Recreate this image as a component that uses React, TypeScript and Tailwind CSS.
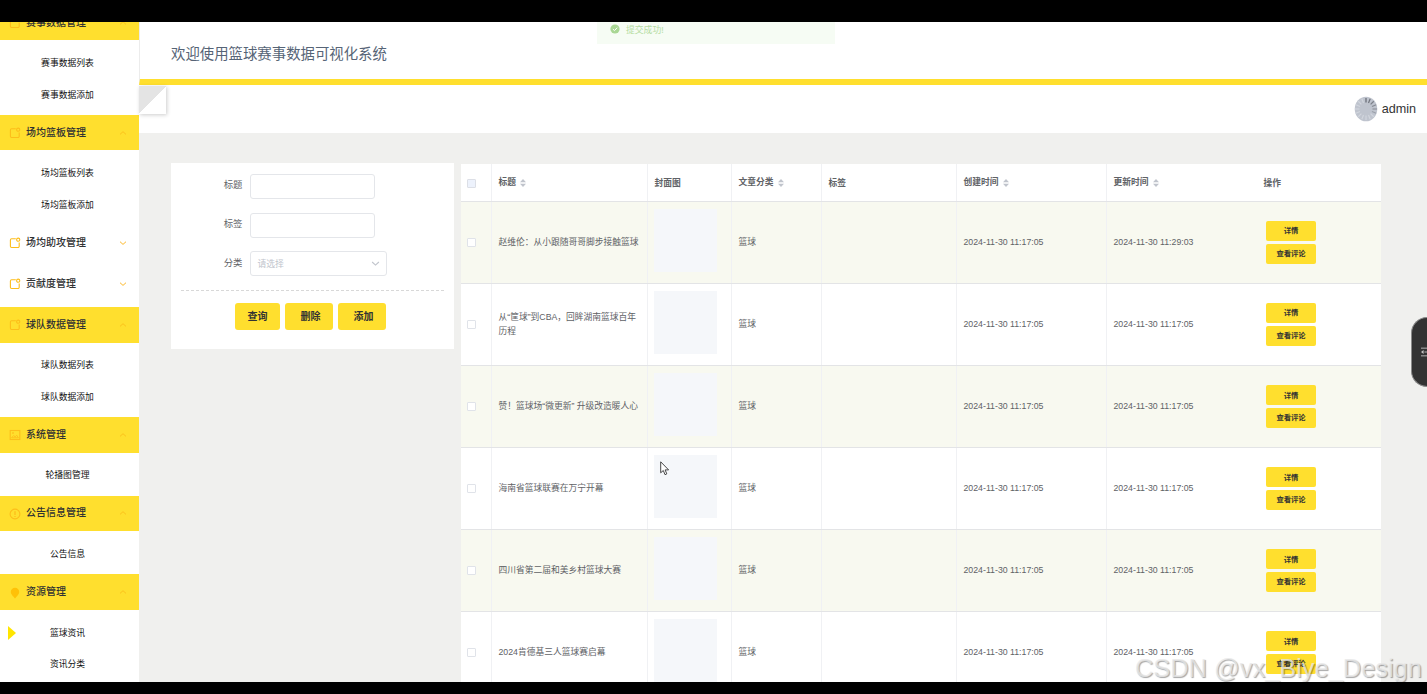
import React from "react";

type MenuGroup = {
  title: string;
  icon: "note" | "image" | "info" | "bulb";
  open: boolean;
  items: string[];
};

type Article = {
  title: string;
  category: string;
  created: string;
  updated: string;
};

const menu: MenuGroup[] = [
  { title: "赛事数据管理", icon: "note", open: true, items: ["赛事数据列表", "赛事数据添加"] },
  { title: "场均篮板管理", icon: "note", open: true, items: ["场均篮板列表", "场均篮板添加"] },
  { title: "场均助攻管理", icon: "note", open: false, items: [] },
  { title: "贡献度管理", icon: "note", open: false, items: [] },
  { title: "球队数据管理", icon: "note", open: true, items: ["球队数据列表", "球队数据添加"] },
  { title: "系统管理", icon: "image", open: true, items: ["轮播图管理"] },
  { title: "公告信息管理", icon: "info", open: true, items: ["公告信息"] },
  { title: "资源管理", icon: "bulb", open: true, items: ["篮球资讯", "资讯分类"] },
];

const articles: Article[] = [
  { title: "赵维伦：从小跟随哥哥脚步接触篮球", category: "篮球", created: "2024-11-30 11:17:05", updated: "2024-11-30 11:29:03" },
  { title: "从“筐球”到CBA，回眸湖南篮球百年历程", category: "篮球", created: "2024-11-30 11:17:05", updated: "2024-11-30 11:17:05" },
  { title: "赞！篮球场“微更新” 升级改造暖人心", category: "篮球", created: "2024-11-30 11:17:05", updated: "2024-11-30 11:17:05" },
  { title: "海南省篮球联赛在万宁开幕", category: "篮球", created: "2024-11-30 11:17:05", updated: "2024-11-30 11:17:05" },
  { title: "四川省第二届和美乡村篮球大赛", category: "篮球", created: "2024-11-30 11:17:05", updated: "2024-11-30 11:17:05" },
  { title: "2024肯德基三人篮球赛启幕", category: "篮球", created: "2024-11-30 11:17:05", updated: "2024-11-30 11:17:05" },
];

const columns = [
  { label: "标题", sortable: true },
  { label: "封面图", sortable: false },
  { label: "文章分类", sortable: true },
  { label: "标签", sortable: false },
  { label: "创建时间", sortable: true },
  { label: "更新时间", sortable: true },
  { label: "操作", sortable: false },
];

const rowGrid = "grid grid-cols-[31px_156px_84px_90px_135px_150px_150px_1fr]";

function MenuIcon({ name }: { name: MenuGroup["icon"] }) {
  if (name === "bulb") {
    return (
      <svg viewBox="0 0 12 12" className="size-3" fill="#ffc107">
        <path d="M6 .8a4.2 4.2 0 0 0-4.2 4.2c0 1.9 1.3 3 2.1 4.2h4.2c.8-1.2 2.1-2.3 2.1-4.2A4.2 4.2 0 0 0 6 .8zM4.1 9.2h3.8L6 11.6z" />
      </svg>
    );
  }
  return (
    <svg viewBox="0 0 12 12" className="size-3" fill="none" stroke="#fdbd1a" strokeWidth="1.1">
      {name === "note" && (
        <>
          <path d="M6.8 1.7H2.6a1.2 1.2 0 0 0-1.2 1.2v6.4a1.2 1.2 0 0 0 1.2 1.2H9a1.2 1.2 0 0 0 1.2-1.2V5.4" />
          <circle cx="9.2" cy="2.7" r="1.6" />
        </>
      )}
      {name === "image" && (
        <>
          <rect x="1.2" y="1.5" width="9.6" height="9" />
          <path d="M2.6 8.8 4.6 6.6l1.6 1.3 1.5-1.7 1.7 2.6z" strokeWidth=".9" />
          <circle cx="4" cy="4" r=".6" strokeWidth=".8" />
        </>
      )}
      {name === "info" && (
        <>
          <circle cx="6" cy="6" r="4.9" />
          <path d="M6 3.2v3.9M6 8v1" strokeWidth="1.3" />
        </>
      )}
    </svg>
  );
}

function Chevron({ up, className }: { up?: boolean; className: string }) {
  return (
    <svg viewBox="0 0 8 8" className={className} fill="none" stroke="currentColor" strokeWidth="1">
      <path d={up ? "M1 5.4 4 2.7l3 2.7" : "M1 2.7 4 5.4l3-2.7"} />
    </svg>
  );
}

function SortIcon() {
  return (
    <svg viewBox="0 0 6 8" className="ml-1 mt-px h-2 w-1.5" fill="#c0c4cc">
      <path d="M3 0 6 3.2H0zM3 8 6 4.8H0z" />
    </svg>
  );
}

function Sidebar() {
  return (
    <aside className="w-[139px] shrink-0 overflow-hidden bg-white">
      <nav className="-mt-[17.3px]">
        {menu.map((group) => (
          <div key={group.title} className={group.open ? "" : "mb-1.5"}>
            <div
              className={`flex h-[35.2px] items-center pl-[9px] pr-3 ${group.open ? "bg-[#ffdf2e]" : "bg-white"}`}
            >
              <span className="mt-px">
                <MenuIcon name={group.icon} />
              </span>
              <span className="-mt-px ml-[5px] flex-1 pt-px text-[10px] font-medium leading-none text-[#303133]">{group.title}</span>
              <Chevron up={group.open} className={`size-2 ${group.open ? "text-[#fcc21c]" : "text-[#fdb92c]"}`} />
            </div>
            {group.open && (
              <ul className="pb-[4.4px] pt-[7.6px]">
                {group.items.map((item) => (
                  <li key={item} className="relative flex h-[31.4px] items-center justify-center pr-1 text-[8.8px] leading-none text-[#111]">
                    {item === "篮球资讯" && (
                      <span className="absolute left-2 border-y-[7px] border-l-8 border-y-transparent border-l-[#ffe500]" />
                    )}
                    {item}
                  </li>
                ))}
              </ul>
            )}
          </div>
        ))}
      </nav>
    </aside>
  );
}

function SearchPanel() {
  return (
    <section className="h-[186px] w-[283px] shrink-0 bg-white px-2.5 pt-[10.5px] text-[9.4px] text-[#606266]">
      <div className="flex h-[25px] items-center">
        <label className="-mt-0.5 w-[61.5px] text-right">标题</label>
        <input className="ml-[7px] h-[25px] w-[125.5px] rounded-[3px] border border-[#e4e6ea]" />
      </div>
      <div className="mt-3.5 flex h-[25px] items-center">
        <label className="-mt-0.5 w-[61.5px] text-right">标签</label>
        <input className="ml-[7px] h-[25px] w-[125.5px] rounded-[3px] border border-[#e4e6ea]" />
      </div>
      <div className="mt-[13.5px] flex h-[25px] items-center">
        <label className="-mt-0.5 w-[61.5px] text-right">分类</label>
        <div className="ml-[7px] flex h-[25px] w-[137px] items-center justify-between rounded-[3px] border border-[#e4e6ea] pl-[7px] pr-1.5">
          <span className="mt-0.5 text-[8.8px] text-[#c0c4cc]">请选择</span>
          <Chevron className="size-[9px] text-[#c0c4cc]" />
        </div>
      </div>
      <div className="mt-[13.5px] border-t border-dashed border-[#d8d8d8]" />
      <div className="ml-[54px] mt-[12.5px] flex gap-[5px] text-[10px] font-bold text-[#333]">
        <button className="h-[27px] w-[45px] rounded-[3px] bg-[#ffdf2e]">查询</button>
        <button className="h-[27px] w-12 rounded-[3px] bg-[#ffdf2e] pl-[3px]">删除</button>
        <button className="h-[27px] w-12 rounded-[3px] bg-[#ffdf2e] pl-[3px]">添加</button>
      </div>
    </section>
  );
}

function ArticleTable() {
  return (
    <section className="ml-[7px] w-[920px] shrink-0 pt-px text-[8.75px] leading-[14.4px] text-[#606266]">
      <div className={`${rowGrid} h-[37.7px] border-b border-[#e3e4e6] bg-white font-bold`}>
        <div className="flex items-center border-r border-[#f0f1f4] pl-1.5">
          <span className="mt-0.5 size-[9px] rounded-[1px] border border-[#dcdfe6] bg-[#edf2fc]" />
        </div>
        {columns.map((col, i) => (
          <div
            key={col.label}
            className={`flex items-center pl-[6.5px] ${i < 5 ? "border-r border-[#f0f1f4]" : ""} ${col.sortable ? "pb-px" : "pt-px"}`}
          >
            {col.label}
            {col.sortable && <SortIcon />}
          </div>
        ))}
      </div>

      {articles.map((row, i) => (
        <div
          key={row.title}
          className={`${rowGrid} h-[82.05px] border-b border-[#e3e4e6] ${i % 2 === 0 ? "bg-[#f8f9f0]" : "bg-white"}`}
        >
          <div className="flex items-center border-r border-[#f0f1f4] pl-1.5">
            <span className="size-[9px] rounded-[1px] border border-[#e0e3e9] bg-white" />
          </div>
          <div className="flex items-center border-r border-[#f0f1f4] pl-[6.5px] pr-2">{row.title}</div>
          <div className="flex items-center border-r border-[#f0f1f4] pl-1.5 pb-1">
            <div className="size-[63px] bg-[#f5f7fa]" />
          </div>
          <div className="flex items-center border-r border-[#f0f1f4] pl-[6.5px]">{row.category}</div>
          <div className="border-r border-[#f0f1f4]" />
          <div className="flex items-center border-r border-[#f0f1f4] pl-[6.5px]">{row.created}</div>
          <div className="flex items-center border-l border-transparent -ml-px pl-[6.5px]">{row.updated}</div>
          <div className="flex flex-col justify-center gap-[2.6px] pl-[9px] text-[7.3px] font-bold leading-none text-[#333]">
            <button className="h-5 w-[50px] rounded-[2px] bg-[#ffdf2e]">详情</button>
            <button className="h-5 w-[50px] rounded-[2px] bg-[#ffdf2e]">查看评论</button>
          </div>
        </div>
      ))}
    </section>
  );
}

// grey disc with the spokes of a loading wheel
function Avatar() {
  return (
    <svg viewBox="0 0 24 26" className="h-[26px] w-6">
      <ellipse cx="12" cy="13" rx="11.3" ry="12.3" fill="#bfc4ce" />
      {Array.from({ length: 16 }, (_, i) => (
        <line
          key={i}
          x1="12"
          y1="2"
          x2="12"
          y2="6.5"
          stroke={i < 6 ? "#656972" : "#d6dae1"}
          strokeOpacity={i < 6 ? 1 - i * 0.12 : 0.8}
          strokeWidth="1.2"
          transform={`rotate(${i * 22.5} 12 13)`}
        />
      ))}
    </svg>
  );
}

export default function App() {
  return (
    <div className="relative flex h-[694px] w-[1427px] flex-col overflow-hidden bg-black pb-3 pt-[22.4px] font-['Liberation_Sans','Noto_Sans_CJK_SC',sans-serif]">
      <div className="flex min-h-0 flex-1 overflow-hidden bg-[#f0f0ee]">
        <Sidebar />

        <main className="min-w-0 flex-1">
          <header className="flex h-[63px] items-center border-b-[6px] border-l border-b-[#ffdf2e] border-l-[#ececec] bg-white pl-[31px] pt-[7px]">
            <h1 className="text-[14.4px] text-[#566476]">欢迎使用篮球赛事数据可视化系统</h1>
          </header>

          <div className="flex h-[47.3px] items-start justify-between bg-white pr-[11px]">
            <div className="mt-[1px] h-[27.5px] w-[27px] bg-[linear-gradient(135deg,#e4e4e4_50%,#fff_50%)] shadow-[1px_1px_4px_rgba(0,0,0,0.2)]" />
            <div className="flex items-center gap-1 pt-[10.5px]">
              <Avatar />
              <span className="pt-px text-[12.6px] text-[#333]">admin</span>
            </div>
          </div>

          <div className="flex items-start pl-8 pt-[30.5px]">
            <SearchPanel />
            <ArticleTable />
          </div>
        </main>
      </div>

      {/* success toast, sliding out under the top edge */}
      <div className="absolute left-[597px] top-[22.4px] flex h-[22px] w-[238px] items-start bg-[#f6fcf4] pl-[13px] pt-[2px]">
        <svg viewBox="0 0 10 10" className="size-2.5">
          <circle cx="5" cy="5" r="4.6" fill="#a9d794" />
          <path d="M2.9 5.1 4.5 6.6 7.2 3.7" fill="none" stroke="#fff" strokeWidth="1" />
        </svg>
        <span className="ml-[6px] text-[8.8px] leading-[12px] text-[#b5dda3]">提交成功!</span>
      </div>

      {/* floating side handle */}
      <div className="absolute right-0 top-[317px] flex h-[70px] w-4 items-center rounded-l-[16px] border border-r-0 border-[#8a8a8a] bg-[#333] pl-[9px]">
        <svg viewBox="0 0 7 12" className="h-3 w-[7px]" fill="none" stroke="#c8c8c8" strokeWidth="1">
          <path d="M0 1.5h7M0 10.5h7M4 6h3" />
          <path d="M0 6 3 3.8v4.4z" fill="#c8c8c8" stroke="none" />
        </svg>
      </div>

      {/* mouse pointer */}
      <svg viewBox="0 0 10 15" className="absolute left-[660px] top-[461px] h-[15px] w-2.5" fill="#fff" stroke="#333" strokeWidth=".9">
        <path d="M.7.8v11l2.6-2.3 1.7 4.2 1.8-.8-1.7-4h3.5z" />
      </svg>

      <div className="absolute left-[1135px] top-[653px] whitespace-nowrap text-[25.4px] leading-[30px] text-[#e9e9e9]/80 [text-shadow:1px_1px_1px_rgba(0,0,0,0.35)]">
        CSDN @vx_Biye_Design
      </div>
    </div>
  );
}
